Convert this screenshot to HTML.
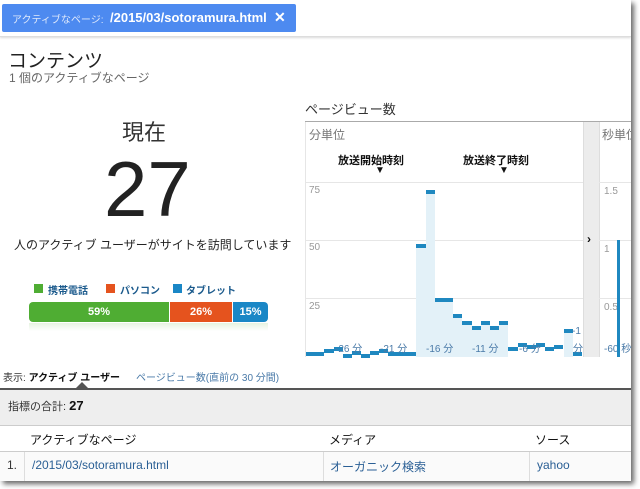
<!DOCTYPE html>
<html><head><meta charset="utf-8"><style>
body{margin:0;width:640px;height:489px;background:#fff;position:relative;overflow:hidden;font-family:"Liberation Sans","Noto Sans CJK JP",sans-serif;}
.a{position:absolute;white-space:nowrap;}
#frame{position:absolute;left:0;top:0;width:631px;height:481px;background:#fff;box-shadow:3px 3px 5px rgba(0,0,0,0.6);overflow:hidden;}
.bar{position:absolute;background:#1f88c0;height:4px;}
.fill{position:absolute;background:#e3f1f8;}
.g{position:absolute;height:1px;background:#e6e6e6;}
.yl{position:absolute;font-size:10px;color:#999;white-space:nowrap;}
.xl{position:absolute;font-size:10px;color:#4a7aa8;white-space:nowrap;}
</style></head><body>
<div id="frame">
<div class="a" style="left:0;top:0;width:631px;height:36px;border-bottom:1px solid #ddd;box-shadow:0 1px 2px rgba(0,0,0,0.15);"></div>
<div class="a" style="left:2px;top:4px;width:294px;height:28px;background:#4d8af0;border-radius:2px;"></div>
<div class="a" style="left:12px;top:11px;font-size:10px;color:#dfe9fb;">アクティブなページ:</div>
<div class="a" style="left:110px;top:10px;font-size:13px;font-weight:bold;color:#fff;">/2015/03/sotoramura.html</div>
<div class="a" style="left:274px;top:9px;font-size:14px;font-weight:bold;color:#fff;">✕</div>

<div class="a" style="left:8px;top:46px;font-size:19px;color:#222;">コンテンツ</div>
<div class="a" style="left:9px;top:69px;font-size:12px;color:#666;">1 個のアクティブなページ</div>

<div class="a" style="left:122px;top:115px;font-size:22px;color:#333;">現在</div>
<div class="a" style="left:104px;top:144px;font-size:78px;color:#222;line-height:90px;">27</div>
<div class="a" style="left:14px;top:236px;font-size:12px;color:#222;">人のアクティブ ユーザーがサイトを訪問しています</div>

<div class="a" style="left:34px;top:284px;width:9px;height:9px;background:#4fad33;"></div>
<div class="a" style="left:48px;top:282px;font-size:10px;font-weight:bold;color:#1b5a8c;">携帯電話</div>
<div class="a" style="left:106px;top:284px;width:9px;height:9px;background:#e5531e;"></div>
<div class="a" style="left:120px;top:282px;font-size:10px;font-weight:bold;color:#1b5a8c;">パソコン</div>
<div class="a" style="left:173px;top:284px;width:9px;height:9px;background:#1a87c6;"></div>
<div class="a" style="left:186px;top:282px;font-size:10px;font-weight:bold;color:#1b5a8c;">タブレット</div>
<div class="a" style="left:29px;top:302px;width:140px;height:20px;background:#4fad33;border-radius:4px 0 0 4px;color:#fff;font-size:11px;font-weight:bold;text-align:center;line-height:20px;">59%</div>
<div class="a" style="left:170px;top:302px;width:62px;height:20px;background:#e5531e;color:#fff;font-size:11px;font-weight:bold;text-align:center;line-height:20px;">26%</div>
<div class="a" style="left:233px;top:302px;width:35px;height:20px;background:#1a87c6;border-radius:0 4px 4px 0;color:#fff;font-size:11px;font-weight:bold;text-align:center;line-height:20px;">15%</div>
<div class="a" style="left:29px;top:323px;width:239px;height:8px;background:linear-gradient(#e6f3e0,#fff);"></div>

<div class="a" style="left:305px;top:99px;font-size:13px;color:#333;">ページビュー数</div>
<div class="a" style="left:305px;top:121px;width:326px;height:1px;background:#aaa;"></div>
<div class="a" style="left:305px;top:122px;width:1px;height:235px;background:#e6e6e6;"></div>
<div class="a" style="left:309px;top:126px;font-size:12px;color:#777;">分単位</div>
<div class="a" style="left:338px;top:152px;font-size:11px;font-weight:bold;color:#111;">放送開始時刻</div>
<div class="a" style="left:375px;top:165px;font-size:10px;color:#111;">▼</div>
<div class="a" style="left:463px;top:152px;font-size:11px;font-weight:bold;color:#111;">放送終了時刻</div>
<div class="a" style="left:499px;top:165px;font-size:10px;color:#111;">▼</div>
<div class="g" style="left:306px;top:182px;width:277px;"></div>
<div class="g" style="left:306px;top:240px;width:277px;"></div>
<div class="g" style="left:306px;top:298px;width:277px;"></div>
<div class="yl" style="left:309px;top:185px;">75</div>
<div class="yl" style="left:309px;top:242px;">50</div>
<div class="yl" style="left:309px;top:301px;">25</div>

<div class="fill" style="left:416px;top:246px;width:10px;height:111px;"></div>
<div class="fill" style="left:426px;top:192px;width:9px;height:165px;"></div>
<div class="fill" style="left:435px;top:300px;width:18px;height:57px;"></div>
<div class="fill" style="left:453px;top:316px;width:9px;height:41px;"></div>
<div class="fill" style="left:462px;top:323px;width:10px;height:34px;"></div>
<div class="fill" style="left:472px;top:328px;width:9px;height:29px;"></div>
<div class="fill" style="left:481px;top:323px;width:9px;height:34px;"></div>
<div class="fill" style="left:490px;top:328px;width:9px;height:29px;"></div>
<div class="fill" style="left:499px;top:323px;width:9px;height:34px;"></div>
<div class="fill" style="left:564px;top:331px;width:9px;height:26px;"></div>

<div class="bar" style="left:306px;top:352px;width:18px;"></div>
<div class="bar" style="left:324px;top:349px;width:10px;"></div>
<div class="bar" style="left:334px;top:347px;width:9px;"></div>
<div class="bar" style="left:343px;top:354px;width:9px;"></div>
<div class="bar" style="left:352px;top:351px;width:9px;"></div>
<div class="bar" style="left:361px;top:354px;width:9px;"></div>
<div class="bar" style="left:370px;top:351px;width:9px;"></div>
<div class="bar" style="left:379px;top:349px;width:9px;"></div>
<div class="bar" style="left:388px;top:352px;width:28px;"></div>
<div class="bar" style="left:416px;top:244px;width:10px;"></div>
<div class="bar" style="left:426px;top:190px;width:9px;"></div>
<div class="bar" style="left:435px;top:298px;width:18px;"></div>
<div class="bar" style="left:453px;top:314px;width:9px;"></div>
<div class="bar" style="left:462px;top:321px;width:10px;"></div>
<div class="bar" style="left:472px;top:326px;width:9px;"></div>
<div class="bar" style="left:481px;top:321px;width:9px;"></div>
<div class="bar" style="left:490px;top:326px;width:9px;"></div>
<div class="bar" style="left:499px;top:321px;width:9px;"></div>
<div class="bar" style="left:508px;top:347px;width:10px;"></div>
<div class="bar" style="left:518px;top:343px;width:9px;"></div>
<div class="bar" style="left:527px;top:345px;width:9px;"></div>
<div class="bar" style="left:536px;top:343px;width:9px;"></div>
<div class="bar" style="left:545px;top:347px;width:9px;"></div>
<div class="bar" style="left:554px;top:345px;width:9px;"></div>
<div class="bar" style="left:564px;top:329px;width:9px;"></div>
<div class="bar" style="left:573px;top:352px;width:9px;"></div>
<div class="xl" style="left:335px;top:340px;">-26 分</div>
<div class="xl" style="left:380px;top:340px;">-21 分</div>
<div class="xl" style="left:426px;top:340px;">-16 分</div>
<div class="xl" style="left:472px;top:340px;">-11 分</div>
<div class="xl" style="left:519px;top:340px;">-6 分</div>
<div class="xl" style="left:572px;top:326px;">-1</div>
<div class="xl" style="left:573px;top:340px;">分</div>

<div class="a" style="left:583px;top:122px;width:15px;height:235px;background:#ececec;border-left:1px solid #ddd;border-right:1px solid #ddd;"></div>
<div class="a" style="left:587px;top:232px;font-size:12px;font-weight:bold;color:#111;">›</div>
<div class="a" style="left:602px;top:126px;font-size:12px;color:#777;">秒単位</div>
<div class="g" style="left:599px;top:182px;width:32px;"></div>
<div class="g" style="left:599px;top:240px;width:32px;"></div>
<div class="g" style="left:599px;top:298px;width:32px;"></div>
<div class="yl" style="left:604px;top:186px;">1.5</div>
<div class="yl" style="left:604px;top:244px;">1</div>
<div class="yl" style="left:604px;top:302px;">0.5</div>
<div class="xl" style="left:604px;top:340px;">-60 秒</div>
<div class="a" style="left:617px;top:240px;width:3px;height:117px;background:#1f88c0;"></div>

<div class="a" style="left:3px;top:369px;font-size:10px;color:#333;">表示: <b style="color:#111;">アクティブ ユーザー</b></div>
<div class="a" style="left:136px;top:369px;font-size:10px;color:#4a7aa8;">ページビュー数(直前の 30 分間)</div>
<div class="a" style="left:0;top:388px;width:631px;height:2px;background:#555;"></div>
<div class="a" style="left:76px;top:382px;width:0;height:0;border-left:6px solid transparent;border-right:6px solid transparent;border-bottom:6px solid #555;"></div>
<div class="a" style="left:0;top:390px;width:631px;height:35px;background:#eee;border-bottom:1px solid #ccc;"></div>
<div class="a" style="left:8px;top:398px;font-size:11px;color:#333;">指標の合計: <b style="font-size:13px;color:#111;">27</b></div>
<div class="a" style="left:30px;top:431px;font-size:12px;color:#111;">アクティブなページ</div>
<div class="a" style="left:329px;top:431px;font-size:12px;color:#111;">メディア</div>
<div class="a" style="left:535px;top:431px;font-size:12px;color:#111;">ソース</div>
<div class="a" style="left:0;top:451px;width:631px;height:30px;background:#fafafa;border-top:1px solid #ccc;"></div>
<div class="a" style="left:24px;top:452px;width:1px;height:29px;background:#ddd;"></div>
<div class="a" style="left:323px;top:452px;width:1px;height:29px;background:#ddd;"></div>
<div class="a" style="left:529px;top:452px;width:1px;height:29px;background:#ddd;"></div>
<div class="a" style="left:7px;top:458px;font-size:12px;color:#333;">1.</div>
<div class="a" style="left:32px;top:458px;font-size:12px;color:#2a5f95;">/2015/03/sotoramura.html</div>
<div class="a" style="left:330px;top:458px;font-size:12px;color:#2a5f95;">オーガニック検索</div>
<div class="a" style="left:537px;top:458px;font-size:12px;color:#2a5f95;">yahoo</div>
</div>
</body></html>
